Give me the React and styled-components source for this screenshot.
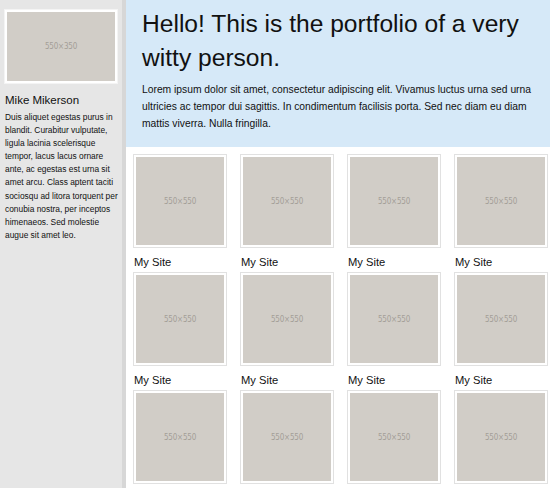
import React from "react";
import styled, { createGlobalStyle } from "styled-components";

const GlobalStyle = createGlobalStyle`
  html, body {
    margin: 0;
    padding: 0;
    background: #ffffff;
  }
  body {
    font-family: "Liberation Sans", Arial, sans-serif;
    color: #111;
  }
`;

const Page = styled.div`
  display: flex;
  width: 550px;
  height: 488px;
  overflow: hidden;
`;

const Sidebar = styled.aside`
  width: 126px;
  flex: none;
  box-sizing: border-box;
  background: #e6e6e6;
  border-right: 4px solid #d7d7d7;
  padding: 9px 0 0 4px;
`;

const Main = styled.main`
  flex: 1;
  min-width: 0;
`;

const Placeholder = styled.div`
  display: flex;
  align-items: center;
  justify-content: center;
  background: #d1cdc7;
  color: #a39e97;
  font-family: "DejaVu Sans Condensed", "DejaVu Sans", sans-serif;
  font-size: 8px;
  letter-spacing: -0.2px;
  width: ${(p) => p.$w}px;
  height: ${(p) => p.$h}px;
`;

const Thumb = styled.div`
  border: 1px solid #e1e1e1;
  padding: 2px;
  background: #fff;
  width: fit-content;
`;

const ProfileThumb = styled(Thumb)`
  border-color: #f4f4f4;
`;

const Name = styled.h3`
  margin: 8px 0 0 1px;
  font-size: 11.5px;
  font-weight: normal;
  line-height: 16px;
`;

const Bio = styled.p`
  margin: 3px 0 0 1px;
  font-size: 8.4px;
  line-height: 13.1px;
  width: 117px;
`;

const Hero = styled.header`
  background: #d6e9f8;
  padding: 7px 14px 15px 16px;
`;

const Title = styled.h1`
  margin: 0;
  font-size: 24.6px;
  font-weight: normal;
  line-height: 34px;
`;

const Lead = styled.p`
  margin: 6px 0 0 0;
  font-size: 10.3px;
  line-height: 17px;
`;

const Grid = styled.section`
  display: grid;
  grid-template-columns: repeat(4, 94px);
  column-gap: 13px;
  padding: 7px 2px 0 7px;
`;

const Item = styled.div`
  display: flex;
  flex-direction: column;
`;

const Caption = styled.div`
  margin: 7px 0 3px 1px;
  font-size: 11.2px;
  line-height: 14px;
  height: 14px;
`;

const sites = Array.from({ length: 12 }, () => "My Site");

export default function App() {
  return (
    <>
      <GlobalStyle />
      <Page>
        <Sidebar>
          <ProfileThumb>
            <Placeholder $w={108} $h={69}>550×350</Placeholder>
          </ProfileThumb>
          <Name>Mike Mikerson</Name>
          <Bio>
            Duis aliquet egestas purus in blandit. Curabitur vulputate, ligula
            lacinia scelerisque tempor, lacus lacus ornare ante, ac egestas est
            urna sit amet arcu. Class aptent taciti sociosqu ad litora torquent
            per conubia nostra, per inceptos himenaeos. Sed molestie augue sit
            amet leo.
          </Bio>
        </Sidebar>
        <Main>
          <Hero>
            <Title>Hello! This is the portfolio of a very witty person.</Title>
            <Lead>
              Lorem ipsum dolor sit amet, consectetur adipiscing elit. Vivamus
              luctus urna sed urna ultricies ac tempor dui sagittis. In
              condimentum facilisis porta. Sed nec diam eu diam mattis viverra.
              Nulla fringilla.
            </Lead>
          </Hero>
          <Grid>
            {sites.map((s, i) => (
              <Item key={i}>
                <Thumb>
                  <Placeholder $w={88} $h={88}>550×550</Placeholder>
                </Thumb>
                <Caption>{s}</Caption>
              </Item>
            ))}
          </Grid>
        </Main>
      </Page>
    </>
  );
}
